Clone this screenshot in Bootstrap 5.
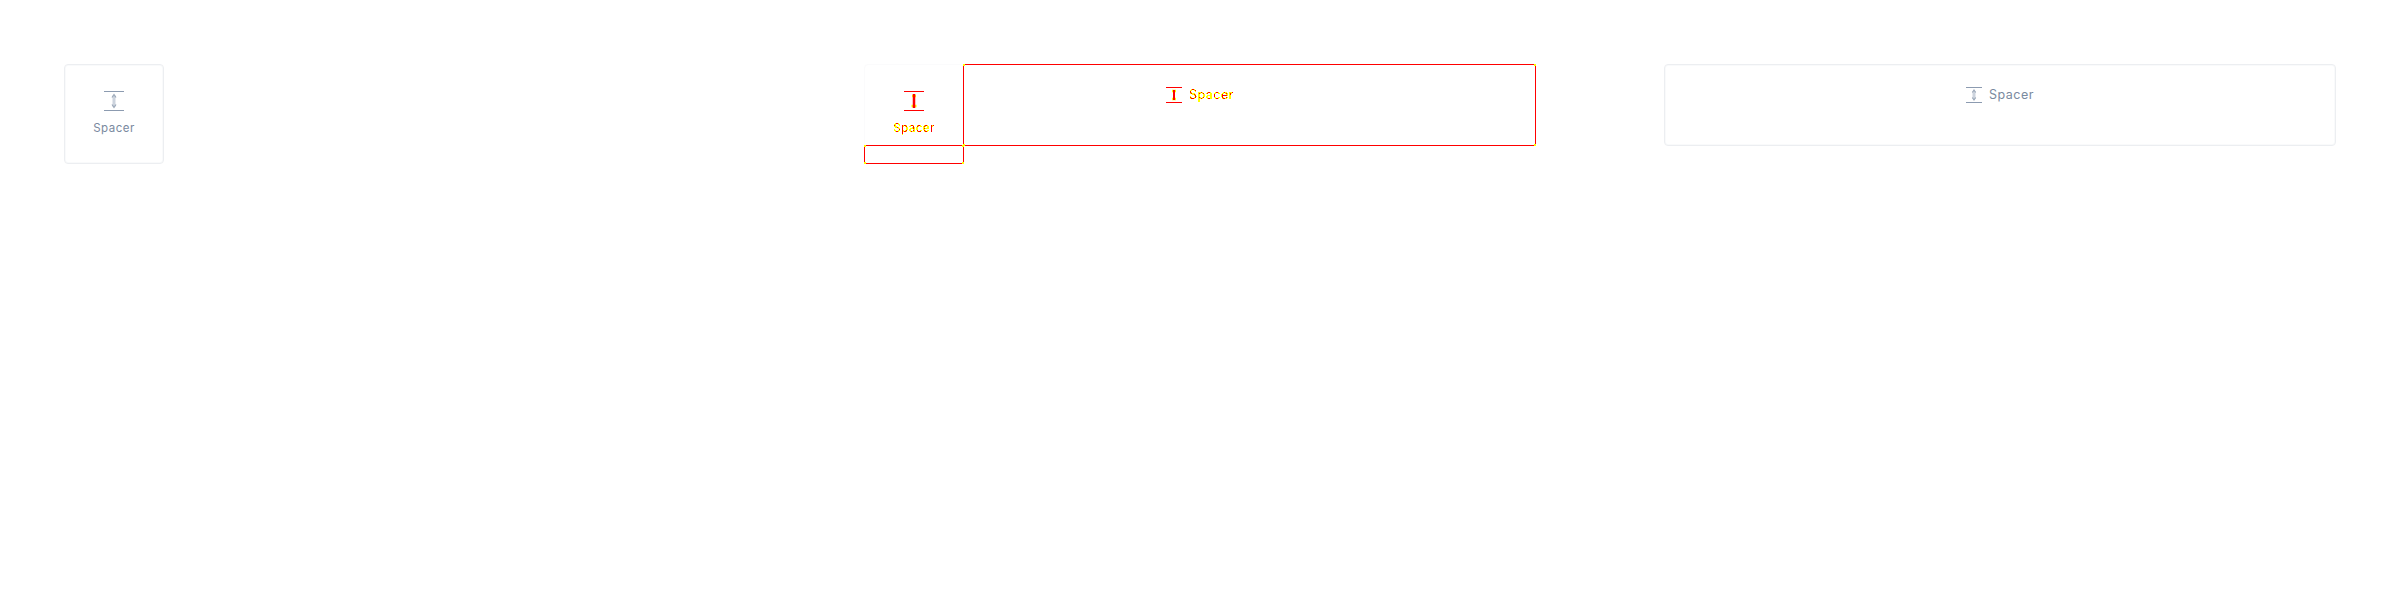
<!doctype html>
<html><head><meta charset="utf-8">
<link href="https://cdn.jsdelivr.net/npm/bootstrap@5.3.0/dist/css/bootstrap.min.css" rel="stylesheet">
<style>
body{background:#fff;font-family:Inter,"Liberation Sans",sans-serif}
.stage{padding:64px;display:grid;grid-template-columns:800px 800px 1fr;align-items:start}
.tile{width:100px;height:100px;border:1px solid #eceef1;box-shadow:0 0 0 1px #f9fafb inset;border-radius:4px;color:#7a8aa0;font-size:11.5px;line-height:18px;letter-spacing:.5px}
.wide{width:672px;height:82px;border:1px solid #eceef1;box-shadow:0 0 0 1px #f9fafb inset;border-radius:4px;color:#7a8aa0;font-size:12.5px;line-height:20px;letter-spacing:.5px;padding-top:20px}
.ghost{border-color:#fbfbfc;box-shadow:none;position:relative}
.pix{color:#000;filter:url(#pixdiff)}
.rowgap{gap:7px}
.diffbox{--e:#f00;--c:#ff0;
 background:
 linear-gradient(var(--c),var(--c)) 0 0/2px 2px no-repeat,
 linear-gradient(var(--c),var(--c)) 100% 0/2px 2px no-repeat,
 linear-gradient(var(--c),var(--c)) 0 100%/2px 2px no-repeat,
 linear-gradient(var(--c),var(--c)) 100% 100%/2px 2px no-repeat,
 linear-gradient(var(--e),var(--e)) 0 0/100% 1px no-repeat,
 linear-gradient(var(--e),var(--e)) 0 100%/100% 1px no-repeat,
 linear-gradient(var(--e),var(--e)) 0 0/1px 100% no-repeat,
 linear-gradient(var(--e),var(--e)) 100% 0/1px 100% no-repeat}
.lower{position:absolute;left:-1px;bottom:-1px;width:100px;height:19px}
.bigbox{position:relative;width:573px;height:82px;margin-left:-1px;padding:21px 0 0 203px;font-size:12.5px;line-height:20px;letter-spacing:.5px}
</style></head><body>
<svg width="0" height="0" class="d-block"><filter id="pixdiff" color-interpolation-filters="sRGB" x="0" y="0" width="100%" height="100%">
<feColorMatrix values="0 0 0 0 1  0 0 0 1 0  0 0 0 0 0  0 0 0 1 0"/>
<feComponentTransfer><feFuncG type="discrete" tableValues="1 1 1 1 0"/><feFuncA type="discrete" tableValues="0 1 1 1 1"/></feComponentTransfer>
</filter></svg>
<div class="stage">
<div><div class="tile d-flex flex-column align-items-center justify-content-center gap-2">
<svg width="20" height="20" viewBox="0 0 20 20"><path d="M0 .5h20M0 19.5h20" stroke="#8c9bb0" fill="none"/><path d="M10 4.500v11" stroke="#ccd3dd" stroke-width="3" fill="none"/><path d="M8 6.500 10 3.500l2 3M8 13.500 10 16.500l2-3" stroke="#9aa7b8" stroke-width="1.200" fill="none"/></svg>
<span>Spacer</span></div></div>
<div class="d-flex align-items-start">
<div class="tile ghost d-flex flex-column align-items-center justify-content-center gap-2">
<svg width="20" height="20" viewBox="0 0 20 20"><path d="M0 .5h20M0 19.5h20" stroke="#f00" fill="none"/><path d="M8 5h4M7.500 15h5" stroke="#ff0" stroke-width="2.500" fill="none"/><path d="M10 3v14" stroke="#f00" stroke-width="2.500" fill="none"/></svg>
<span class="pix">Spacer</span>
<div class="diffbox lower"></div></div>
<div class="diffbox bigbox">
<div class="d-flex align-items-center rowgap">
<svg width="16" height="16" viewBox="0 0 16 16"><path d="M0 .5h16M0 15.500h16" stroke="#f00" fill="none"/><path d="M6 4h4M6 12h4" stroke="#ff0" stroke-width="2.500" fill="none"/><path d="M8 3v10" stroke="#f00" stroke-width="2" fill="none"/></svg>
<span class="pix">Spacer</span></div></div>
</div>
<div><div class="wide">
<div class="d-flex justify-content-center align-items-center rowgap">
<svg width="16" height="16" viewBox="0 0 16 16"><path d="M0 .5h16M0 15.500h16" stroke="#8c9bb0" fill="none"/><path d="M8 4v8" stroke="#ccd3dd" stroke-width="3" fill="none"/><path d="M6.300 5.500 8 3l1.700 2.500M6.300 10.500 8 13l1.700-2.500" stroke="#9aa7b8" stroke-width="1.100" fill="none"/></svg>
<span>Spacer</span></div></div></div>
</div>
</body></html>
